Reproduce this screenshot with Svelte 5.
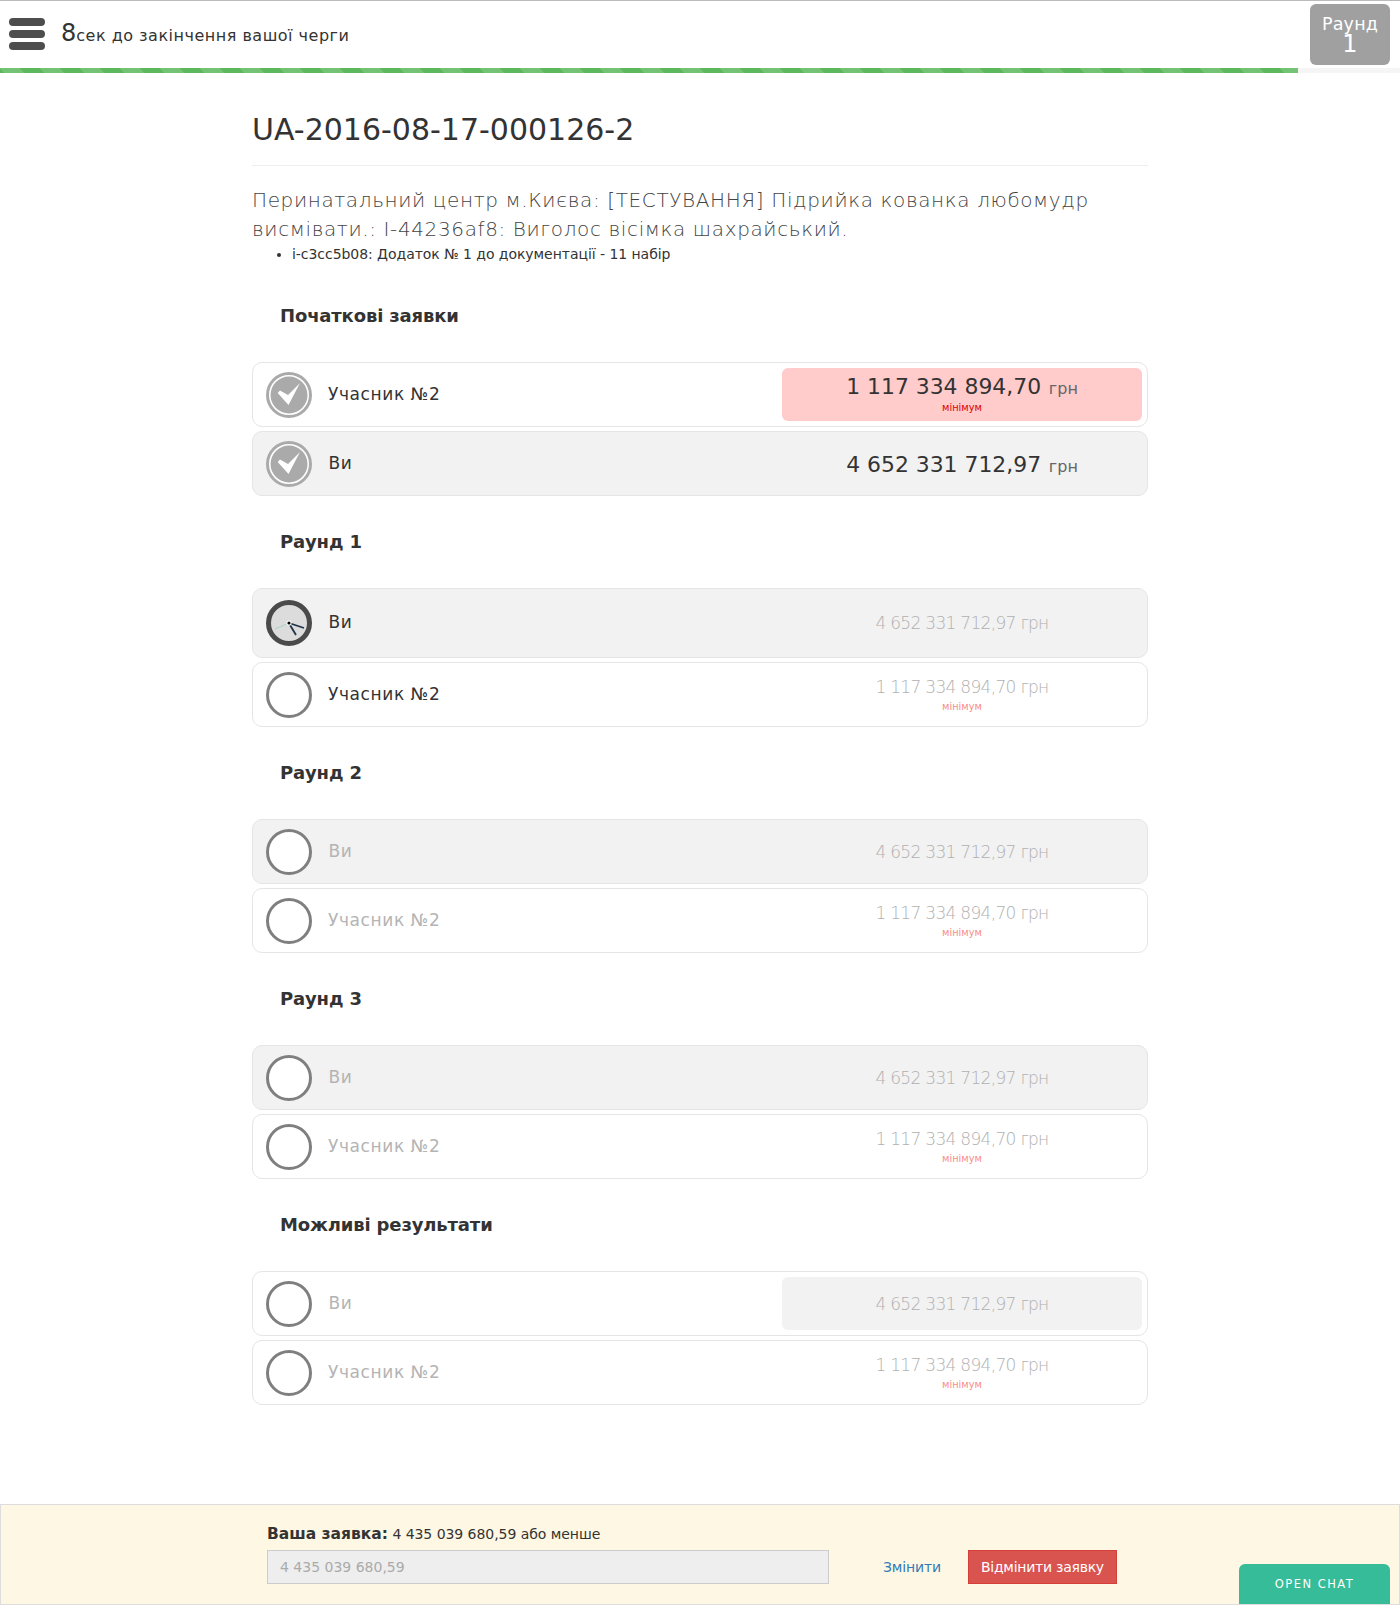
<script>
  const you = '4 652 331 712,97';
  const other = '1 117 334 894,70';

  const sections = [
    { title: 'Початкові заявки', cls: 'first', rows: [
      { name: 'Учасник №2', amount: other, min: true, icon: 'done', state: 'active', hl: 'red' },
      { name: 'Ви', amount: you, icon: 'done', state: 'active', mine: true }
    ] },
    { title: 'Раунд 1', rows: [
      { name: 'Ви', amount: you, icon: 'clock', state: 'pending', mine: true, tall: true },
      { name: 'Учасник №2', amount: other, min: true, icon: 'empty', state: 'pending' }
    ] },
    { title: 'Раунд 2', rows: [
      { name: 'Ви', amount: you, icon: 'empty', state: 'off', mine: true },
      { name: 'Учасник №2', amount: other, min: true, icon: 'empty', state: 'off' }
    ] },
    { title: 'Раунд 3', rows: [
      { name: 'Ви', amount: you, icon: 'empty', state: 'off', mine: true },
      { name: 'Учасник №2', amount: other, min: true, icon: 'empty', state: 'off' }
    ] },
    { title: 'Можливі результати', rows: [
      { name: 'Ви', amount: you, icon: 'empty', state: 'off', hl: 'gray' },
      { name: 'Учасник №2', amount: other, min: true, icon: 'empty', state: 'off' }
    ] }
  ];
</script>

<div class="page">
  <header class="topbar">
    <div class="burger"><span></span><span></span><span></span></div>
    <div class="timer"><span class="num">8</span>сек до закінчення вашої черги</div>
    <div class="round-box"><div>Раунд</div><div class="round-num">1</div></div>
  </header>
  <div class="progress"><div class="progress-fill"></div></div>

  <main class="wrap">
    <h1>UA-2016-08-17-000126-2</h1>
    <h4 class="desc">Перинатальний центр м.Києва: [ТЕСТУВАННЯ] Підрийка кованка любомудр висмівати.: I-44236af8: Виголос вісімка шахрайський.</h4>
    <ul class="items">
      <li>i-c3cc5b08: Додаток № 1 до документації - 11 набір</li>
    </ul>

    {#each sections as s}
      <section class="stage {s.cls ?? ''}">
        <h3>{s.title}</h3>
        {#each s.rows as r}
          <div class="row {r.state}" class:mine={r.mine} class:tall={r.tall}>
            <div class="ic">
              {#if r.icon === 'done'}
                <svg width="46" height="46" viewBox="0 0 46 46">
                  <circle cx="23" cy="23" r="21.5" fill="#fff" stroke="#aaa" stroke-width="3"/>
                  <circle cx="23" cy="23" r="18.5" fill="#aaa"/>
                  <path d="M11.7 21L14 18.5L22 23L34 11L22.5 33z" fill="#fff"/>
                </svg>
              {:else if r.icon === 'clock'}
                <svg width="46" height="46" viewBox="0 0 46 46">
                  <circle cx="23" cy="23" r="20.5" fill="#dcdcdc" stroke="#4a4a4a" stroke-width="5"/>
                  <path d="M23 23L9 29" stroke="#a9d4c4" stroke-width="1" fill="none"/>
                  <path d="M23 23L38 28M24 25L30 35" stroke="#1f3448" stroke-width="1.8" fill="none"/>
                  <circle cx="23" cy="23" r="2.6" fill="#fff"/>
                  <circle cx="23" cy="23" r="1.6" fill="#000"/>
                </svg>
              {:else}
                <svg width="46" height="46" viewBox="0 0 46 46">
                  <circle cx="23" cy="23" r="21.5" fill="#fff" stroke="#7f7f7f" stroke-width="3"/>
                </svg>
              {/if}
            </div>
            <div class="name" class:you={r.name === 'Ви'}>{r.name}</div>
            <div class="bid {r.hl ?? ''}" class:has-min={r.min}>
              <div class="sum"><span class="val">{r.amount}</span> <span class="cur">грн</span></div>
              {#if r.min}<div class="min">мінімум</div>{/if}
            </div>
          </div>
        {/each}
      </section>
    {/each}
  </main>

  <footer class="bidbar">
    <div class="bid-form">
      <div class="bid-label"><b>Ваша заявка:</b> 4 435 039 680,59 або менше</div>
      <div class="bid-line">
        <input class="bid-input" disabled value="4 435 039 680,59" />
        <a class="edit" href="#top">Змінити</a>
        <button class="cancel">Відмінити заявку</button>
      </div>
    </div>
    <div class="chat">OPEN CHAT</div>
  </footer>
</div>

<style>
  :global(body) { margin: 0; background: #fff; font-family: "DejaVu Sans", sans-serif; color: #333; }
  .page { width: 1400px; height: 1605px; display: flex; flex-direction: column; overflow: hidden; }

  /* top bar */
  .topbar { height: 67px; border-top: 1px solid #bbb; display: flex; align-items: center; padding: 0 10px 0 9px; box-sizing: content-box; }
  .burger { width: 36px; display: flex; flex-direction: column; gap: 4px; margin-bottom: 2px; }
  .burger span { height: 8px; border-radius: 4px; background: #4d4d4d; }
  .timer { margin-left: 16px; margin-bottom: 4px; font-size: 16px; letter-spacing: .5px; color: #333; flex: 1; }
  .num { font-size: 24px; letter-spacing: 0; }
  .round-box { width: 80px; height: 61px; border-radius: 6px; background: #a0a0a0; color: #fff; text-align: center; font-size: 17.5px; letter-spacing: .2px; line-height: 20px; padding-top: 10px; box-sizing: border-box; }
  .round-num { font-size: 24px; line-height: 21px; }

  .progress { height: 5px; background: #f5f5f5; }
  .progress-fill {
    width: 1298px; height: 5px;
    background-color: #5cb85c;
    background-image: linear-gradient(45deg, rgba(255,255,255,.15) 25%, transparent 25%, transparent 50%, rgba(255,255,255,.15) 50%, rgba(255,255,255,.15) 75%, transparent 75%, transparent);
    background-size: 40px 40px;
  }

  /* content */
  .wrap { width: 896px; margin: 0 auto; flex: 1; }
  h1 { font-size: 30px; font-weight: 400; line-height: 33px; margin: 40px 0 0; padding-bottom: 19px; border-bottom: 1px solid #eee; color: #333; }
  .desc { font-size: 20px; font-weight: 200; line-height: 29px; letter-spacing: .62px; margin: 20px 0 0; color: #444; }
  .items { margin: 0; padding-left: 40px; font-size: 14px; line-height: 20px; letter-spacing: -.05px; }

  .stage h3 { font-size: 18px; font-weight: 700; line-height: 20px; margin: 0; padding: 32px 28px 36px; letter-spacing: -.15px; color: #333; }
  .stage.first h3 { padding-top: 42px; padding-bottom: 36px; }

  .row { display: flex; align-items: center; height: 65px; box-sizing: border-box; margin-bottom: 4px; padding: 5px; border: 1px solid #e5e5e5; border-radius: 10px; background: #fff; }
  .row.mine { background: #f2f2f2; }
  .row.tall { height: 70px; }
  .ic { width: 46px; height: 46px; margin-left: 8px; flex: none; }
  .ic svg { display: block; }
  .name { margin-left: 16px; margin-bottom: 2px; font-size: 17px; letter-spacing: .6px; color: #333; flex: 1; }
  .name.you { margin-left: 16.5px; }
  .off .name { color: #b4b4b4; }

  .bid { width: 360px; height: 53px; box-sizing: border-box; border-radius: 6px; display: flex; flex-direction: column; align-items: center; justify-content: center; }
  .bid.has-min { padding-bottom: 3px; }
  .bid.red { background: #ffcbcb; }
  .bid.gray { background: #f2f2f2; }
  .sum { font-size: 17px; font-weight: 200; line-height: 24px; color: #b0b0b0; letter-spacing: -.7px; }
  .min { font-size: 9.8px; line-height: 11px; margin-top: 2px; color: #fa8c8c; }
  .active .sum { font-weight: 400; }
  .active .bid { padding-top: 4px; }
  .active .bid.has-min { padding-top: 2px; }
  .active .val { font-size: 21.9px; color: #333; letter-spacing: 0; }
  .active .cur { color: #666; font-size: 16px; margin-left: 3px; letter-spacing: 0; }
  .active .min { color: #d00; margin-top: 1px; }

  /* bottom bar */
  .bidbar { height: 101px; box-sizing: border-box; background: #fef7e3; border: 1px solid #ddd; position: relative; padding: 17px 0 0 266px; }
  .bid-label { font-size: 14px; line-height: 24px; letter-spacing: -.05px; color: #333; }
  .bid-label b { font-size: 15.5px; font-weight: 700; letter-spacing: 0; }
  .bid-line { display: flex; align-items: center; margin-top: 4px; }
  .bid-input { width: 562px; height: 34px; box-sizing: border-box; padding: 0 12px; font: 14px "DejaVu Sans", sans-serif; color: #aaa; background: #eee; border: 1px solid #ccc; border-radius: 0; }
  .edit { margin-left: 54px; font-size: 14px; letter-spacing: -.15px; color: #337ab7; text-decoration: none; }
  .cancel { margin-left: 27px; height: 34px; padding: 0 12px; font: 14px "DejaVu Sans", sans-serif; letter-spacing: -.25px; color: #fff; background: #d9534f; border: 1px solid #d43f3a; border-radius: 0; }
  .chat { position: absolute; right: 9px; bottom: 0; width: 151px; height: 40px; border-radius: 6px 6px 0 0; background: #36bc98; color: #fff; font-size: 11.5px; letter-spacing: 1.5px; text-align: center; line-height: 40px; }
</style>
